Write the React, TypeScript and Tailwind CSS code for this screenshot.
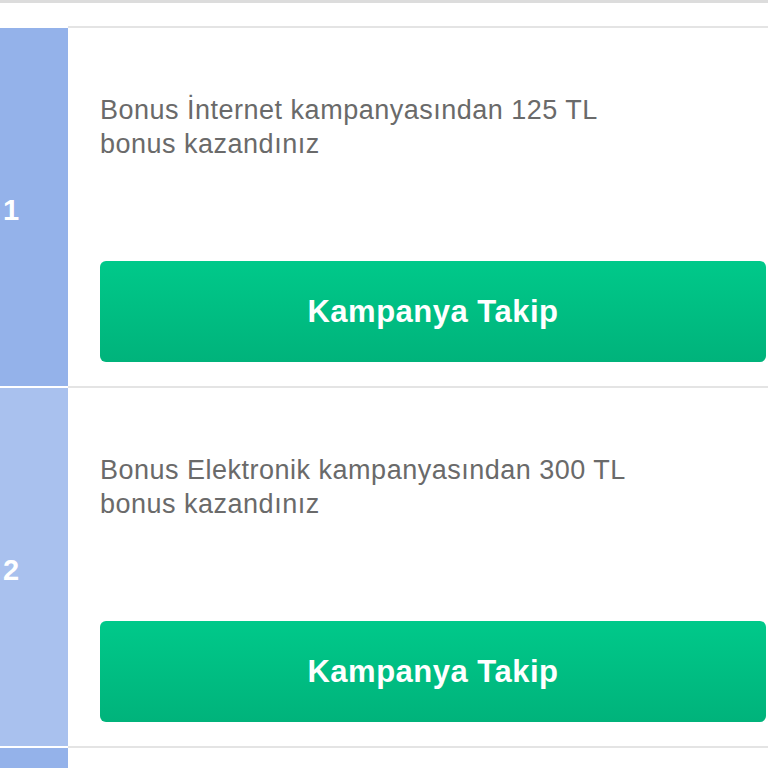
import React from 'react'

interface Reward {
  rank: number
  text: string[]
  tone: string
}

const rewards: Reward[] = [
  { rank: 1, text: ['Bonus İnternet kampanyasından 125 TL', 'bonus kazandınız'], tone: 'bg-[#94b2ea]' },
  { rank: 2, text: ['Bonus Elektronik kampanyasından 300 TL', 'bonus kazandınız'], tone: 'bg-[#a9c1ee]' },
  { rank: 3, text: ['Bonus Market kampanyasından 50 TL', 'bonus kazandınız'], tone: 'bg-[#94b2ea]' },
]

const RewardRow = ({ rank, text, tone }: Reward) => (
  <div className="flex h-[360px] shrink-0">
    <div className="w-[68px] shrink-0 border-t-2 border-white">
      <div className={`${tone} h-full flex items-center pl-[3px] pt-[6px]`}>
        <span className="text-white font-bold text-[29px] leading-none">{rank}</span>
      </div>
    </div>
    <div className="flex-1 min-w-0 border-t-2 border-[#e4e4e4] bg-white flex flex-col pl-[32px] pt-[65px] pb-[24px]">
      <p className="text-[27px] leading-[34px] tracking-[0.5px] text-[#6a6a6a] whitespace-nowrap">
        {text[0]}
        <br />
        {text[1]}
      </p>
      <button className="mt-auto h-[101px] w-[666px] shrink-0 rounded-[6px] bg-gradient-to-b from-[#00c98a] to-[#00b37b] text-white text-[31px] font-bold tracking-[0.5px] flex items-center justify-center pt-[2px]">
        Kampanya Takip
      </button>
    </div>
  </div>
)

export default function App() {
  return (
    <div
      className="w-[768px] h-[768px] overflow-hidden bg-white flex flex-col"
      style={{ fontFamily: '"Liberation Sans", Arial, sans-serif' }}
    >
      <div className="h-[3px] bg-[#dcdcdc] shrink-0" />
      <div className="h-[23px] bg-white shrink-0" />
      {rewards.map((r) => (
        <RewardRow key={r.rank} {...r} />
      ))}
    </div>
  )
}
